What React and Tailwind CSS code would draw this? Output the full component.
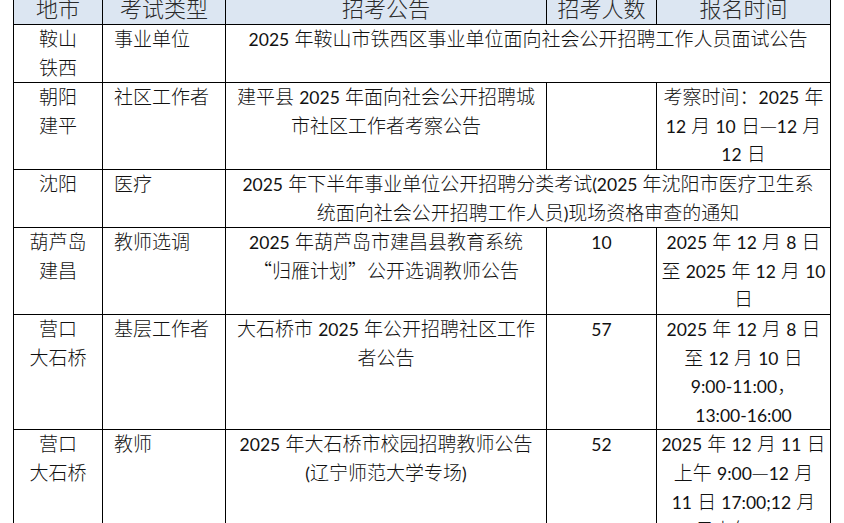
import React from 'react';

// 辽宁近期招考信息表
const rows = [
  {
    city: ['鞍山', '铁西'],
    type: '事业单位',
    wide: ['2025 年鞍山市铁西区事业单位面向社会公开招聘工作人员面试公告'],
  },
  {
    city: ['朝阳', '建平'],
    type: '社区工作者',
    notice: ['建平县 2025 年面向社会公开招聘城', '市社区工作者考察公告'],
    count: '',
    time: ['考察时间：2025 年', '12 月 10 日—12 月', '12 日'],
  },
  {
    city: ['沈阳'],
    type: '医疗',
    wide: [
      '2025 年下半年事业单位公开招聘分类考试(2025 年沈阳市医疗卫生系',
      '统面向社会公开招聘工作人员)现场资格审查的通知',
    ],
  },
  {
    city: ['葫芦岛', '建昌'],
    type: '教师选调',
    notice: ['2025 年葫芦岛市建昌县教育系统', '“归雁计划”公开选调教师公告'],
    count: '10',
    time: ['2025 年 12 月 8 日', '至 2025 年 12 月 10', '日'],
  },
  {
    city: ['营口', '大石桥'],
    type: '基层工作者',
    notice: ['大石桥市 2025 年公开招聘社区工作', '者公告'],
    count: '57',
    time: ['2025 年 12 月 8 日', '至 12 月 10 日', '9:00-11:00，', '13:00-16:00'],
  },
  {
    city: ['营口', '大石桥'],
    type: '教师',
    notice: ['2025 年大石桥市校园招聘教师公告', '(辽宁师范大学专场)'],
    count: '52',
    time: ['2025 年 12 月 11 日', '上午 9:00—12 月', '11 日 17:00;12 月', '日上午 9:00'],
  },
];

// latin runs a bit smaller (word doc used calibri), dashes/quotes full width
const Txt = ({ t }) =>
  t.split(/([\x21-\x7e]+|[“”—])/).map((s, i) => {
    if (!s) return null;
    if (/^[“”—]$/.test(s))
      return (
        <span key={i} className="font-['Noto_Sans_CJK_SC',sans-serif] leading-none">
          {s}
        </span>
      );
    if (/^[\x21-\x7e]+$/.test(s))
      return (
        <span key={i} className="text-[17.5px] font-normal leading-none">
          {s}
        </span>
      );
    return <React.Fragment key={i}>{s}</React.Fragment>;
  });

const Lines = ({ items }) =>
  items.map((t, i) => (
    <div key={i} className="whitespace-nowrap">
      <Txt t={t} />
    </div>
  ));

const td = 'border border-black align-top p-0';

export default function App() {
  return (
    <div className="h-[523px] w-[844px] overflow-hidden bg-white">
      <table className="ml-[13px] -mt-[7px] w-[817px] table-fixed border-collapse font-['Lato','Noto_Sans_CJK_SC',sans-serif] text-[19px] font-light leading-[28.6px] text-[#111]">
        <colgroup>
          <col className="w-[89px]" />
          <col className="w-[123px]" />
          <col className="w-[321px]" />
          <col className="w-[110px]" />
          <col className="w-[174px]" />
        </colgroup>
        <thead>
          <tr className="h-[31px] bg-[#dce6f2] text-[22px] leading-[30px] text-[#2a2a2a]">
            {['地市', '考试类型', '招考公告', '招考人数', '报名时间'].map((h) => (
              <th key={h} className="border border-black p-0 text-center font-light">
                {h}
              </th>
            ))}
          </tr>
        </thead>
        <tbody>
          {rows.map((r, idx) => (
            <tr key={idx}>
              <td className={`${td} text-center`}>
                <Lines items={r.city} />
              </td>
              <td className={`${td} pl-[11px]`}>{r.type}</td>
              {r.wide ? (
                <td colSpan={3} className={`${td} text-center`}>
                  <Lines items={r.wide} />
                </td>
              ) : (
                <>
                  <td className={`${td} text-center`}>
                    <Lines items={r.notice} />
                  </td>
                  <td className={`${td} text-center`}>
                    <Txt t={r.count} />
                  </td>
                  <td className={`${td} text-center`}>
                    <Lines items={r.time} />
                  </td>
                </>
              )}
            </tr>
          ))}
        </tbody>
      </table>
    </div>
  );
}
